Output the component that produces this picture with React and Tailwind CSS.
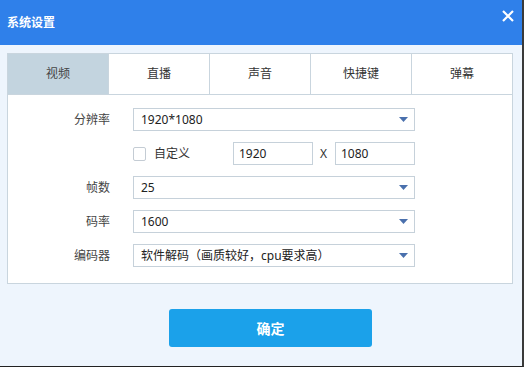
import React from "react";

const font = { fontFamily: '"Noto Sans", "Noto Sans CJK SC", sans-serif' };

function Arrow() {
  return (
    <svg width="9" height="5" viewBox="0 0 9 5" className="shrink-0">
      <path d="M0 0 H9 L4.5 5 Z" fill="#4a70ad" />
    </svg>
  );
}

function Select({ value }) {
  return (
    <div className="w-[282px] h-[23px] border border-[#c6d1da] bg-white flex items-center justify-between pl-[7px] pr-[6px] text-[12px] text-[#222]">
      <span>{value}</span>
      <Arrow />
    </div>
  );
}

function Row({ label, children }) {
  return (
    <div className="flex items-center h-[23px]">
      <div className="w-[102px] text-right text-[12px] text-[#444]">{label}</div>
      <div className="ml-[23px] flex items-center">{children}</div>
    </div>
  );
}

export default function App() {
  const tabs = ["视频", "直播", "声音", "快捷键", "弹幕"];
  return (
    <div className="w-[524px] h-[367px] bg-[#eef5fd] border-r-2 border-b border-r-[#3a3a3a] border-b-[#222] flex flex-col" style={font}>
      <div className="h-[45px] bg-[#2f80ea] flex items-center justify-between pl-[7px] pr-[8px] shrink-0">
        <span className="text-white text-[12px] font-bold">系统设置</span>
        <svg width="12" height="12" viewBox="0 0 12 12" className="-mt-[14px]">
          <path d="M1 1 L11 11 M11 1 L1 11" stroke="white" strokeWidth="2.2" />
        </svg>
      </div>
      <div className="mt-[8px] ml-[7px] w-[506px] flex flex-col">
        <div className="flex h-[41px] border-t border-l border-[#c9d5de]">
          {tabs.map((t, i) => (
            <div
              key={t}
              className={
                "flex-1 flex items-center justify-center text-[12px] border-r border-[#c9d5de] " +
                (i === 0 ? "bg-[#c3d4df] text-[#444]" : "bg-white text-[#333]")
              }
            >
              {t}
            </div>
          ))}
        </div>
        <div className="bg-white border border-[#c9d5de] pt-[13px] pb-[16px] flex flex-col gap-[11px]">
          <Row label="分辨率">
            <Select value="1920*1080" />
          </Row>
          <Row label="">
            <div className="w-[13px] h-[14px] border border-[#c4ccd4] rounded-[2px] bg-white" />
            <span className="ml-[8px] w-[79px] text-[12px] text-[#333]">自定义</span>
            <div className="w-[80px] h-[23px] border border-[#c6d1da] bg-white flex items-center pl-[5px] text-[12px] text-[#222]">1920</div>
            <span className="ml-[7px] w-[15px] text-[12px] text-[#333]">X</span>
            <div className="w-[80px] h-[23px] border border-[#c6d1da] bg-white flex items-center pl-[5px] text-[12px] text-[#222]">1080</div>
          </Row>
          <Row label="帧数">
            <Select value="25" />
          </Row>
          <Row label="码率">
            <Select value="1600" />
          </Row>
          <Row label="编码器">
            <Select value="软件解码（画质较好，cpu要求高）" />
          </Row>
        </div>
      </div>
      <div className="mt-[25px] ml-[169px] w-[203px] h-[38px] rounded-[3px] bg-[#1ba1ea] flex items-center justify-center text-white text-[14px] font-bold">
        确定
      </div>
    </div>
  );
}
